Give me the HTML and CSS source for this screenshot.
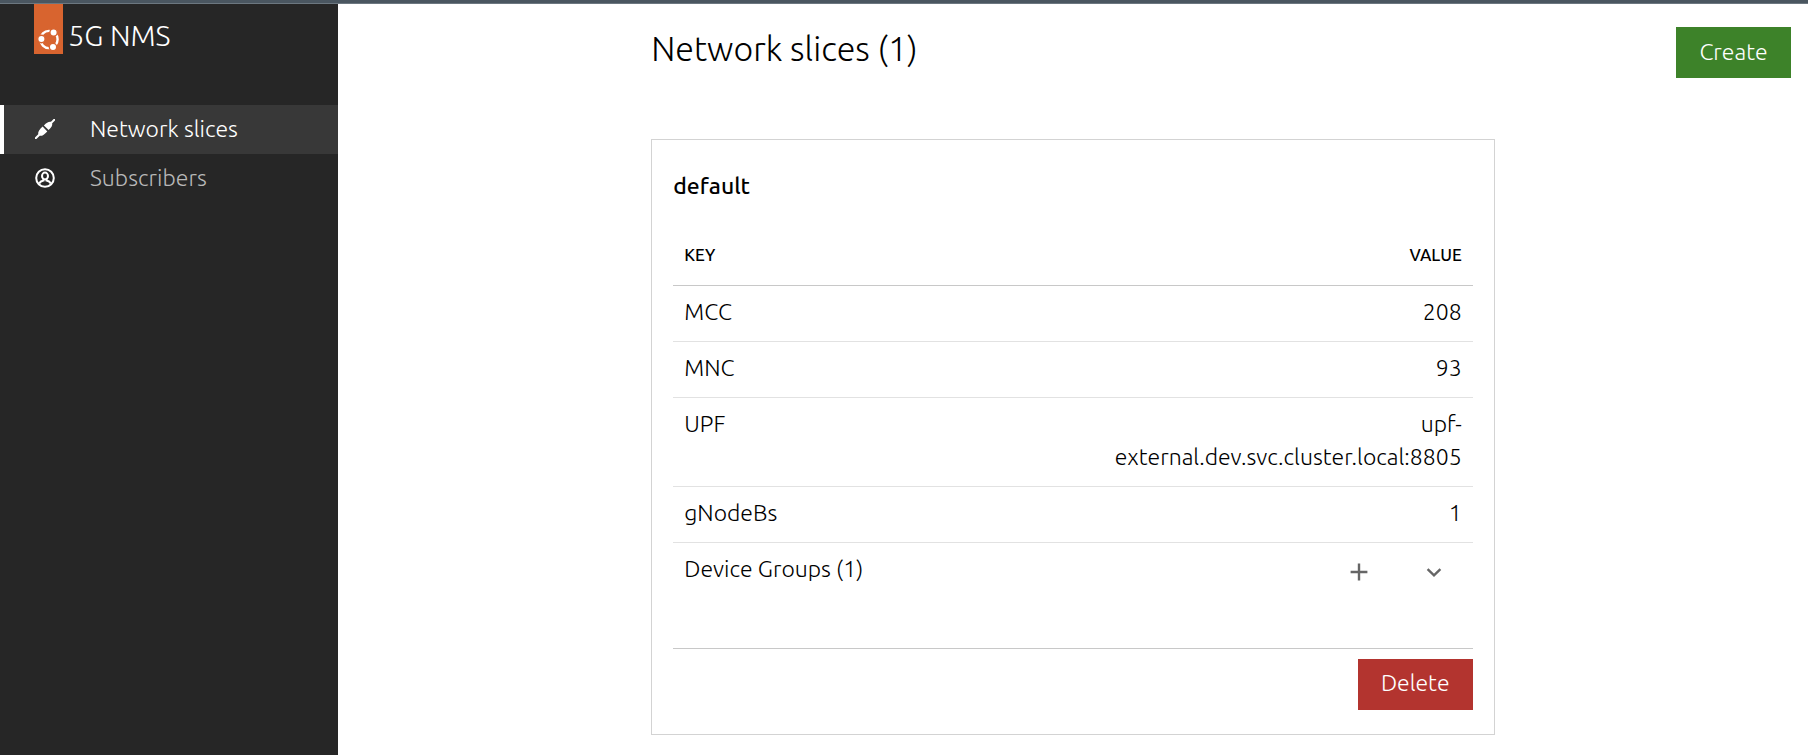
FILE: index.html
```
<!DOCTYPE html>
<html lang="en">
<head>
<meta charset="utf-8">
<title>5G NMS</title>
<link rel="stylesheet" href="styles.css">
</head>
<body>
<div class="topline"></div>
<div class="app">
  <aside class="sidebar">
    <a class="brand" href="#">
      <span class="brand-tag">
        <svg class="brand-icon" viewBox="0 0 22 22" aria-hidden="true">
          <circle cx="11" cy="11.5" r="8.6" fill="none" stroke="#fff" stroke-width="2.4"/>
          <g fill="#fff" stroke="#d8642f" stroke-width="1.4">
            <circle cx="3.4" cy="11" r="3.7"/>
            <circle cx="15.6" cy="4.4" r="3.7"/>
            <circle cx="15" cy="19" r="3.7"/>
          </g>
        </svg>
      </span>
      <span class="brand-name">5G NMS</span>
    </a>
    <nav class="nav">
      <a class="nav-item active" href="#">
        <svg class="nav-icon" viewBox="0 0 20 20" aria-hidden="true">
          <path fill="#fff" d="M0 18.6 3.2 15.2C2.8 12.6 4.6 10.4 7.6 7.6L12.3 12.4C9.4 15.4 7.2 17.2 4.8 16.8L1.4 20 0 20ZM8.9 6.4C11.6 3.6 13.6 2.4 16 2.8L18.6 0 20 0 20 1.4 17.2 4.2C17.6 6.6 16.2 8.6 13.6 11.1Z"/>
        </svg>
        Network slices
      </a>
      <a class="nav-item" href="#">
        <svg class="nav-icon" viewBox="0 0 20 20" fill="none" stroke="#fff" stroke-width="2" aria-hidden="true">
          <circle cx="10" cy="10" r="8.8"/>
          <ellipse cx="10" cy="8" rx="3" ry="3.4"/>
          <path d="M4.2 15.6C5 13.6 6.6 13 8.4 12.6V11M15.8 15.6C15 13.6 13.4 13 11.6 12.6V11"/>
        </svg>
        Subscribers
      </a>
    </nav>
  </aside>
  <main class="main">
    <h1 class="title">Network slices (1)</h1>
    <div class="actions"><button class="button positive" type="button">Create</button></div>
    <section class="card">
      <h2 class="card-title">default</h2>
      <table class="table">
        <thead><tr><th>KEY</th><th>VALUE</th></tr></thead>
        <tbody>
          <tr><td>MCC</td><td>208</td></tr>
          <tr><td>MNC</td><td>93</td></tr>
          <tr><td>UPF</td><td>upf-<wbr>external.dev.svc.cluster.local:8805</td></tr>
          <tr><td>gNodeBs</td><td>1</td></tr>
          <tr class="groups">
            <td>Device Groups (1)</td>
            <td>
              <div class="icon-buttons">
                <button class="icon-button" type="button" aria-label="Add device group">
                  <svg viewBox="0 0 22 22" aria-hidden="true"><path d="M11 2.6V19.4M2.6 11H19.4" fill="none" stroke="#666" stroke-width="2.4"/></svg>
                </button>
                <button class="icon-button" type="button" aria-label="Show device groups">
                  <svg viewBox="0 0 22 22" aria-hidden="true"><path d="M4.6 8.2 11 14.4 17.4 8.2" fill="none" stroke="#666" stroke-width="2.4"/></svg>
                </button>
              </div>
            </td>
          </tr>
        </tbody>
      </table>
      <div class="card-footer"><button class="button negative" type="button">Delete</button></div>
    </section>
  </main>
</div>
</body>
</html>
```
FILE: styles.css
```
* { box-sizing: border-box; }
body {
  margin: 0;
  min-height: 100vh;
  display: flex;
  flex-direction: column;
  background: #fff;
  color: #000;
  font: 300 23px/33px Ubuntu, "Noto Sans", sans-serif;
}
.topline { height: 4px; background: #4a5660; border-bottom: 1px solid #6c7780; }
.app { flex: 1; display: grid; grid-template-columns: 338px minmax(0, 1fr); }
.sidebar { background: #262626; }
.brand { display: flex; gap: 5px; padding-left: 34px; height: 101px; color: #fff; text-decoration: none; }
.brand-tag { width: 29px; height: 50px; background: #d8642f; display: flex; align-items: flex-end; justify-content: center; padding-bottom: 4px; }
.brand-icon { width: 22px; height: 22px; overflow: visible; }
.brand-name { font-size: 29px; line-height: 62px; }
.nav-item {
  display: flex;
  align-items: center;
  gap: 35px;
  height: 49px;
  padding: 0 0 2px 31px;
  border-left: 4px solid transparent;
  color: #b8b8b8;
  text-decoration: none;
}
.nav-item.active { background: #383838; border-color: #fff; color: #fff; }
.nav-icon { width: 20px; height: 20px; }
.main {
  display: grid;
  grid-template-columns: 13fr 35fr 13fr;
  grid-template-rows: auto 1fr;
  row-gap: 61px;
  padding: 23px 0 20px;
}
.title { grid-column: 2; margin: 0; font-size: 34px; line-height: 42px; font-weight: 200; }
.actions { grid-column: 3; display: flex; justify-content: flex-end; padding-right: 17px; }
.button { height: 51px; min-width: 115px; padding: 0 22px 3px; border: 0; color: #fff; font: inherit; }
.positive { background: #3d8229; }
.negative { background: #b3342f; }
.card { grid-column: 2; align-self: start; border: 1px solid #d3d3d3; padding: 29px 21px 24px; }
.card-title { margin: 0; font-size: 23px; line-height: 33px; font-weight: 500; }
.table { width: 100%; table-layout: fixed; border-collapse: collapse; margin-top: 23px; border-bottom: 1px solid #c8c8c8; }
.table th { height: 60px; padding: 0 11px; text-align: left; font-size: 17px; line-height: 22px; font-weight: 500; border-bottom: 1px solid #c8c8c8; }
.table td { padding: 9px 11px 13px; vertical-align: top; border-bottom: 1px solid #e2e2e2; }
.table th:last-child, .table td:last-child { text-align: right; }
.table .groups td { height: 106px; border-bottom: 0; }
.icon-buttons { display: flex; justify-content: flex-end; gap: 53px; padding: 9px 17px 0 0; }
.icon-button { width: 22px; height: 22px; padding: 0; border: 0; background: none; }
.icon-button svg { display: block; width: 22px; height: 22px; }
.card-footer { display: flex; justify-content: flex-end; margin-top: 10px; }
```
